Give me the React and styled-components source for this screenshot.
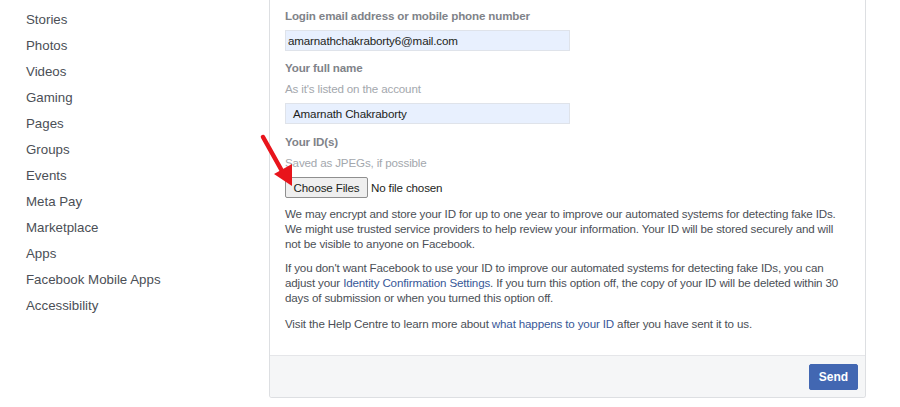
import styled, { createGlobalStyle } from "styled-components";

const GlobalStyle = createGlobalStyle`
  html, body {
    margin: 0;
    padding: 0;
    background: #fff;
    font-family: "Liberation Sans", Arial, Helvetica, sans-serif;
  }
`;

const Page = styled.div`
  position: relative;
  display: flex;
  width: 900px;
  height: 407px;
  overflow: hidden;
`;

const Sidebar = styled.nav`
  width: 269px;
  flex-shrink: 0;
  padding: 7px 0 0 26px;
  box-sizing: border-box;
`;

const NavItem = styled.a`
  display: block;
  font-size: 13.3px;
  line-height: 26px;
  color: #4b4f56;
  text-decoration: none;
`;

const Panel = styled.div`
  width: 597px;
  height: 398px;
  flex-shrink: 0;
  display: flex;
  flex-direction: column;
  border: 1px solid #dddfe2;
  border-top: none;
  border-radius: 0 0 3px 3px;
  box-sizing: border-box;
  overflow: hidden;
  font-size: 11.6px;
  letter-spacing: -0.15px;
`;

const Body = styled.div`
  flex: 1;
  padding: 8px 15px 0 15px;
`;

const Label = styled.div`
  font-weight: bold;
  line-height: 16px;
  color: #7f8389;
  margin-top: ${(p) => p.$mt || 0}px;
`;

const Hint = styled.div`
  line-height: 16px;
  color: #a3a7ad;
  margin-top: 5px;
`;

const Field = styled.div`
  margin-top: 6px;
  width: 285px;
  height: 21px;
  box-sizing: border-box;
  background: #e8f0fe;
  border: 1px solid #dfe3ea;
  padding-left: ${(p) => p.$pad}px;
  line-height: 19px;
  color: #1c1e21;
`;

const FileRow = styled.div`
  margin-top: 6px;
  display: flex;
  align-items: center;
  gap: 3px;
  color: #1c1e21;
`;

const FileButton = styled.button`
  width: 83px;
  height: 21px;
  padding: 0;
  font-family: inherit;
  font-size: inherit;
  letter-spacing: inherit;
  color: #1c1e21;
  background: #efefef;
  border: 1px solid #8f8f8f;
  border-radius: 2px;
`;

const Para = styled.p`
  margin: ${(p) => p.$mt}px 0 0 0;
  line-height: 15px;
  color: #4b4f56;
  width: 565px;
`;

const Link = styled.a`
  color: #385898;
  text-decoration: none;
`;

const Footer = styled.div`
  height: 42px;
  box-sizing: border-box;
  background: #f5f6f7;
  border-top: 1px solid #e5e6e9;
  display: flex;
  justify-content: flex-end;
  align-items: center;
  padding-right: 7px;
`;

const SendButton = styled.button`
  width: 49px;
  height: 26px;
  padding: 0;
  font-family: inherit;
  font-size: 12px;
  font-weight: bold;
  color: #fff;
  background: #4267b2;
  border: 1px solid #4267b2;
  border-radius: 2px;
`;

const Arrow = styled.svg`
  position: absolute;
  left: 0;
  top: 0;
  pointer-events: none;
`;

const navItems = [
  "Stories",
  "Photos",
  "Videos",
  "Gaming",
  "Pages",
  "Groups",
  "Events",
  "Meta Pay",
  "Marketplace",
  "Apps",
  "Facebook Mobile Apps",
  "Accessibility",
];

export default function App() {
  return (
    <>
      <GlobalStyle />
      <Page>
        <Sidebar>
          {navItems.map((item) => (
            <NavItem key={item} href="#">
              {item}
            </NavItem>
          ))}
        </Sidebar>
        <Panel>
          <Body>
            <Label>Login email address or mobile phone number</Label>
            <Field $pad={2}>amarnathchakraborty6@mail.com</Field>
            <Label $mt={9}>Your full name</Label>
            <Hint>As it's listed on the account</Hint>
            <Field $pad={7}>Amarnath Chakraborty</Field>
            <Label $mt={10}>Your ID(s)</Label>
            <Hint>Saved as JPEGs, if possible</Hint>
            <FileRow>
              <FileButton>Choose Files</FileButton>
              <span>No file chosen</span>
            </FileRow>
            <Para $mt={8}>
              We may encrypt and store your ID for up to one year to improve our
              automated systems for detecting fake IDs. We might use trusted
              service providers to help review your information. Your ID will be
              stored securely and will not be visible to anyone on Facebook.
            </Para>
            <Para $mt={9}>
              If you don't want Facebook to use your ID to improve our automated
              systems for detecting fake IDs, you can adjust your{" "}
              <Link href="#">Identity Confirmation Settings</Link>. If you turn
              this option off, the copy of your ID will be deleted within 30 days
              of submission or when you turned this option off.
            </Para>
            <Para $mt={11}>
              Visit the Help Centre to learn more about{" "}
              <Link href="#">what happens to your ID</Link> after you have sent
              it to us.
            </Para>
          </Body>
          <Footer>
            <SendButton>Send</SendButton>
          </Footer>
        </Panel>
        <Arrow width="900" height="407" viewBox="0 0 900 407">
          <line
            x1="263"
            y1="137"
            x2="282"
            y2="171"
            stroke="#e8141b"
            strokeWidth="4.5"
            strokeLinecap="round"
          />
          <polygon points="274,174 292,164 292,186" fill="#e8141b" />
        </Arrow>
      </Page>
    </>
  );
}
